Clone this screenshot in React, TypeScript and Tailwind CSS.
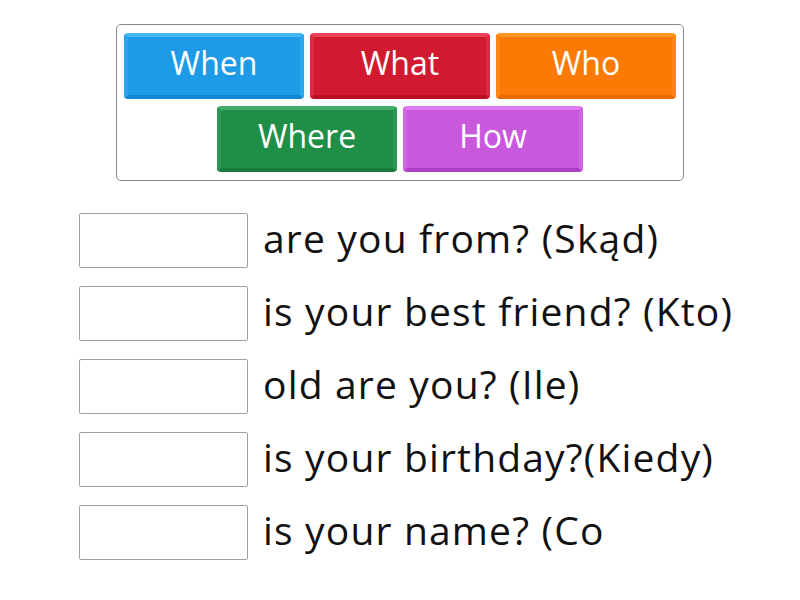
const words = [
  { label: "When", cls: "bg-[#1d9be6] border-t-[#45b8f7] border-x-[#2aa6ee] border-b-[#1285d0]" },
  { label: "What", cls: "bg-[#d11a30] border-t-[#ea4358] border-x-[#dd2a40] border-b-[#b80f24]" },
  { label: "Who", cls: "bg-[#fb7a06] border-t-[#ff9626] border-x-[#fd8512] border-b-[#e56a00]" },
  { label: "Where", cls: "bg-[#1f8f47] border-t-[#45ad6a] border-x-[#2a9a53] border-b-[#157a3a]" },
  { label: "How", cls: "bg-[#c858dc] border-t-[#e07cf2] border-x-[#d066e4] border-b-[#ad40c2]" },
];

const questions = [
  "are you from? (Skąd)",
  "is your best friend? (Kto)",
  "old are you? (Ile)",
  "is your birthday?(Kiedy)",
  "is your name? (Co",
];

function WordTile({ label, cls }: { label: string; cls: string }) {
  return (
    <div
      className={`w-[180px] h-[66px] rounded-[4px] border-4 flex items-center justify-center text-white text-[32px] font-medium leading-none ${cls}`}
    >
      <span className="-mt-[6px]">{label}</span>
    </div>
  );
}

export default function App() {
  return (
    <div className="w-[800px] h-[600px] bg-white font-['Open_Sans','Noto_Sans',sans-serif]">
      <div className="pt-[24px] flex justify-center">
        <div className="w-[568px] h-[157px] border border-[#8a8a8a] rounded-[5px] px-[7px] pt-[8px] flex flex-col items-center gap-[7px]">
          <div className="flex gap-[6px]">
            {words.slice(0, 3).map((w) => (
              <WordTile key={w.label} {...w} />
            ))}
          </div>
          <div className="flex gap-[6px]">
            {words.slice(3).map((w) => (
              <WordTile key={w.label} {...w} />
            ))}
          </div>
        </div>
      </div>
      <div className="pl-[79px] pt-[32px] flex flex-col gap-[18px]">
        {questions.map((q) => (
          <div key={q} className="flex items-center">
            <div className="w-[169px] h-[55px] border border-[#a0a0a0] rounded-[2px] bg-white" />
            <span className="ml-[15px] text-[39px] tracking-[0.03em] text-[#111] leading-none -mt-[6px]">{q}</span>
          </div>
        ))}
      </div>
    </div>
  );
}
